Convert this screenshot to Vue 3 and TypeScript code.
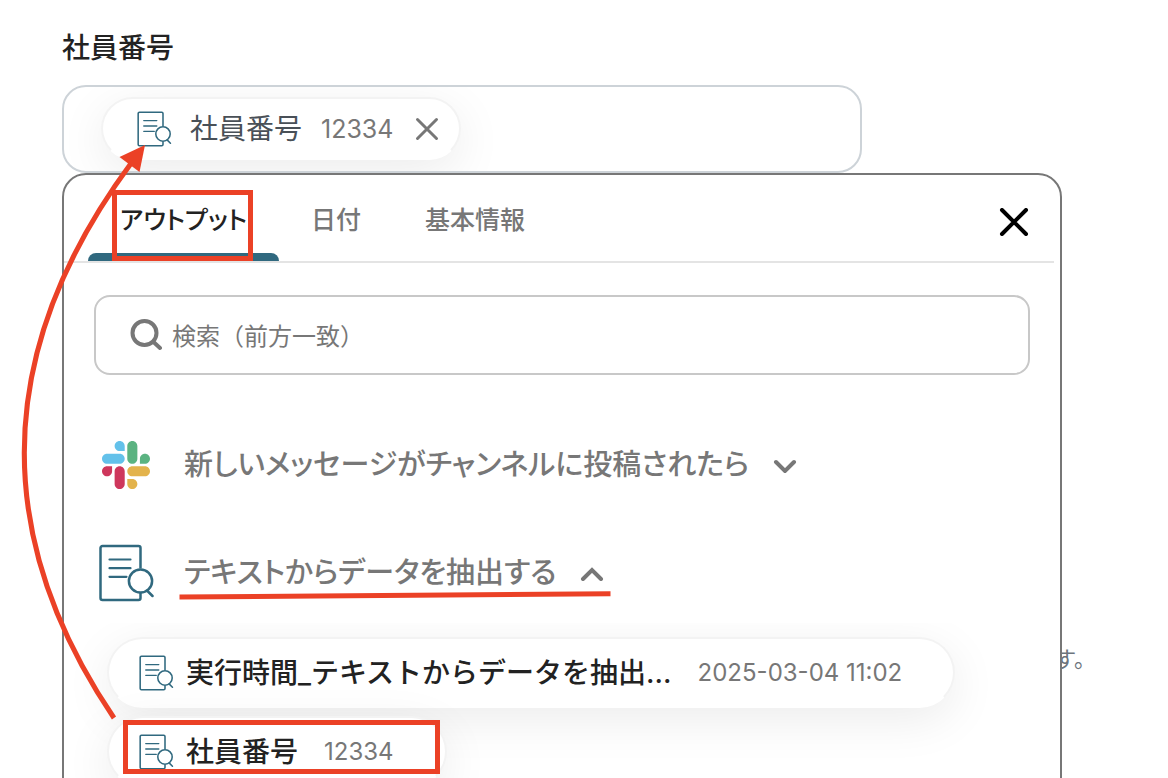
<script setup lang="ts">
import { defineComponent, h, ref } from 'vue'

interface Tab {
  id: string
  label: string
}

interface OutputItem {
  label: string
  value: string
}

const DocSearchIcon = defineComponent({
  name: 'DocSearchIcon',
  setup() {
    return () =>
      h(
        'svg',
        {
          viewBox: '0 0 56 58',
          fill: 'none',
          stroke: '#30697f',
          'stroke-width': 2.5,
          'stroke-linecap': 'round',
          'aria-hidden': 'true',
        },
        [
          h('path', {
            d: 'M42.500 24.500V4a2 2 0 0 0-2-2H4.500a2 2 0 0 0-2 2v50a2 2 0 0 0 2 2h36a2 2 0 0 0 2-2v-5',
            'stroke-linecap': 'butt',
          }),
          h('path', { d: 'M11.500 15.500h21M11.500 24.200h21M11.500 32.800h17', 'stroke-width': 2.2 }),
          h('circle', { cx: 42.5, cy: 37, r: 11.6 }),
          h('path', { d: 'M49.500 47l5 5' }),
        ],
      )
  },
})

const tabs: Tab[] = [
  { id: 'output', label: 'アウトプット' },
  { id: 'date', label: '日付' },
  { id: 'basic', label: '基本情報' },
]

const items: OutputItem[] = [
  { label: '実行時間_テキストからデータを抽出...', value: '2025-03-04 11:02' },
  { label: '社員番号', value: '12334' },
]

const activeTab = ref('output')
const query = ref('')
</script>

<template>
  <main class="page">
    <h1 id="field-title" class="title">社員番号</h1>

    <div class="picker">
      <div class="field" role="group" aria-labelledby="field-title">
        <div class="chip">
          <DocSearchIcon class="doc-small" />
          <span class="chip-label">社員番号</span>
          <span class="chip-value">12334</span>
          <button type="button" class="chip-remove" aria-label="削除">
            <svg viewBox="0 0 24 24" aria-hidden="true">
              <path d="M2.500 2.500l19 19M21.500 2.500l-19 19" />
            </svg>
          </button>
        </div>
      </div>

      <p class="note">す。</p>

      <section class="panel">
        <header class="panel-head">
          <div class="tabs" role="tablist">
            <button
              v-for="tab in tabs"
              :key="tab.id"
              type="button"
              role="tab"
              class="tab"
              :class="{ active: tab.id === activeTab }"
              :aria-selected="tab.id === activeTab"
              @click="activeTab = tab.id"
            >
              {{ tab.label }}
            </button>
          </div>
          <button type="button" class="close" aria-label="閉じる">
            <svg viewBox="0 0 28 28" aria-hidden="true">
              <path d="M2 2l24 24M26 2L2 26" />
            </svg>
          </button>
        </header>

        <label class="search">
          <svg class="search-icon" viewBox="0 0 32 32" aria-hidden="true">
            <circle cx="14.5" cy="14" r="12" />
            <path d="M23.500 23l6.500 6" />
          </svg>
          <input v-model="query" type="text" placeholder="検索（前方一致）" aria-label="検索" />
        </label>

        <div class="groups">
          <button type="button" class="group" aria-expanded="false">
            <span class="group-icon">
              <svg class="slack" viewBox="0 0 122.8 122.8" aria-hidden="true">
                <path
                  fill="#ce375c"
                  d="M25.8 77.6c0 7.1-5.8 12.9-12.9 12.9S0 84.7 0 77.6s5.8-12.9 12.9-12.9h12.9v12.9zM32.3 77.6c0-7.1 5.8-12.9 12.9-12.9s12.9 5.8 12.9 12.9v32.3c0 7.1-5.8 12.9-12.9 12.9s-12.9-5.8-12.9-12.9V77.6z"
                />
                <path
                  fill="#63c1ea"
                  d="M45.2 25.8c-7.1 0-12.9-5.8-12.9-12.9S38.1 0 45.2 0s12.9 5.8 12.9 12.9v12.9H45.2zM45.2 32.3c7.1 0 12.9 5.8 12.9 12.9s-5.8 12.9-12.9 12.9H12.9C5.8 58.1 0 52.3 0 45.2s5.8-12.9 12.9-12.9h32.3z"
                />
                <path
                  fill="#5bb381"
                  d="M97 45.2c0-7.1 5.8-12.9 12.9-12.9s12.9 5.8 12.9 12.9-5.8 12.9-12.9 12.9H97V45.2zM90.5 45.2c0 7.1-5.8 12.9-12.9 12.9s-12.9-5.8-12.9-12.9V12.9C64.7 5.8 70.5 0 77.6 0s12.9 5.8 12.9 12.9v32.3z"
                />
                <path
                  fill="#e3b34c"
                  d="M77.6 97c7.1 0 12.9 5.8 12.9 12.9s-5.8 12.9-12.9 12.9-12.9-5.8-12.9-12.9V97h12.9zM77.6 90.5c-7.1 0-12.9-5.8-12.9-12.9s5.8-12.9 12.9-12.9h32.3c7.1 0 12.9 5.8 12.9 12.9s-5.8 12.9-12.9 12.9H77.6z"
                />
              </svg>
            </span>
            <span class="group-label">新しいメッセージがチャンネルに投稿されたら</span>
            <svg class="chevron" viewBox="0 0 24 16" aria-hidden="true">
              <path d="M3 5l9 9 9-9" />
            </svg>
          </button>

          <button type="button" class="group" aria-expanded="true">
            <span class="group-icon"><DocSearchIcon class="doc-large" /></span>
            <span class="group-label">テキストからデータを抽出する</span>
            <svg class="chevron" viewBox="0 0 24 16" aria-hidden="true">
              <path d="M3 14l9-9 9 9" />
            </svg>
          </button>
        </div>

        <div class="list">
          <button v-for="item in items" :key="item.label" type="button" class="pill">
            <DocSearchIcon class="doc-small" />
            <span class="pill-label">{{ item.label }}</span>
            <span class="pill-value">{{ item.value }}</span>
          </button>
        </div>
      </section>
    </div>

    <svg class="marks" width="1168" height="778" viewBox="0 0 1168 778" aria-hidden="true">
      <rect x="114.5" y="192.5" width="136" height="66" />
      <rect x="125.5" y="722.5" width="312" height="49" />
      <path d="M179.500 597L610.500 593.800" />
      <path d="M114 718Q-74 440 132 162" />
      <path class="head" d="M145 145L119.500 157L139.500 172Z" />
    </svg>
  </main>
</template>

<style>
body {
  margin: 0;
  background: #fff;
}
</style>

<style scoped>
.page {
  position: relative;
  box-sizing: border-box;
  height: 100vh;
  overflow: hidden;
  padding: 28px 106px 0 62px;
  background: #fff;
  color: #222;
  font-family: Inter, "Noto Sans CJK JP", sans-serif;
}

button,
input {
  margin: 0;
  padding: 0;
  border: 0;
  background: none;
  color: inherit;
  font: inherit;
}

button {
  cursor: pointer;
}

.title {
  margin: 0 0 17px;
  font-size: 28px;
  line-height: 40px;
  font-weight: 500;
}

.picker {
  position: relative;
}

.field {
  box-sizing: border-box;
  display: flex;
  align-items: center;
  width: 80%;
  height: 88px;
  padding: 0 37px 1px;
  border: 2px solid #cdd3d8;
  border-radius: 24px;
  overflow: hidden;
}

.chip,
.pill {
  box-sizing: border-box;
  display: flex;
  align-items: center;
  border: 2px solid #f3f3f3;
  border-bottom-color: #fff;
  background: #fff;
  box-shadow: 0 12px 48px rgba(0, 0, 0, 0.08);
}

.chip {
  height: 63px;
  padding: 0 20px 0 33px;
  border-radius: 32px;
}

.doc-small {
  flex: none;
  width: 36px;
  height: 36px;
}

.chip-label {
  margin-left: 18px;
  color: #495057;
  font-size: 28px;
  line-height: 40px;
}

.chip-value {
  margin: 0 22px 0 19px;
  color: #777;
  font-size: 25px;
}

.chip-remove {
  display: flex;
}

.chip-remove svg {
  width: 24px;
  height: 24px;
  fill: none;
  stroke: #777;
  stroke-width: 3;
  stroke-linecap: round;
}

.note {
  position: absolute;
  top: 558px;
  right: -34px;
  margin: 0;
  color: #6c757d;
  font-size: 22px;
  line-height: 32px;
}

.panel {
  position: relative;
  padding-bottom: 40px;
  border: 2px solid #777;
  border-radius: 24px 24px 0 0;
  background: #fff;
}

.panel-head {
  display: flex;
  align-items: center;
  justify-content: space-between;
  height: 86px;
  margin-right: 6px;
  padding: 0 24px;
  border-bottom: 2px solid #e4e4e4;
}

.tabs {
  display: flex;
  align-self: stretch;
}

.tab {
  position: relative;
  padding: 0 32px;
  color: #777;
  font-size: 25px;
  font-weight: 500;
  font-feature-settings: "palt";
}

.tab.active {
  color: #222;
}

.tab.active::after {
  content: "";
  position: absolute;
  right: 0;
  bottom: 0;
  left: 0;
  height: 8px;
  border-radius: 8px 8px 0 0;
  background: #30697f;
}

.close {
  display: flex;
  padding-top: 8px;
}

.close svg {
  width: 32px;
  height: 28px;
  fill: none;
  stroke: #000;
  stroke-width: 4;
  stroke-linecap: round;
}

.search {
  box-sizing: border-box;
  display: flex;
  align-items: center;
  gap: 10px;
  height: 80px;
  margin: 32px 30px 0;
  padding: 0 34px;
  border: 2px solid #c8c8c8;
  border-radius: 16px;
}

.search-icon {
  flex: none;
  width: 32px;
  height: 32px;
  fill: none;
  stroke: #777;
  stroke-width: 4;
  stroke-linecap: round;
}

.search input {
  flex: 1;
  min-width: 0;
  height: 40px;
  padding-top: 2px;
  outline: 0;
  font-size: 24px;
}

.search input::placeholder {
  color: #777;
  opacity: 1;
}

.groups {
  display: flex;
  flex-direction: column;
  align-items: flex-start;
  gap: 44px;
  padding: 58px 30px 18px;
}

.group {
  display: flex;
  align-items: center;
  height: 64px;
  color: #777;
}

.group-icon {
  display: flex;
  align-items: center;
  justify-content: center;
  width: 64px;
  height: 64px;
}

.slack {
  width: 48px;
  height: 48px;
}

.doc-large {
  width: 56px;
  height: 58px;
}

.group-label {
  margin: 0 24px 0 26px;
  font-size: 29px;
  line-height: 40px;
  font-weight: 500;
  font-feature-settings: "palt";
}

.chevron {
  width: 24px;
  height: 16px;
  fill: none;
  stroke: #777;
  stroke-width: 4;
  stroke-linecap: round;
}

.list {
  display: flex;
  flex-direction: column;
  align-items: flex-start;
  gap: 8px;
  padding: 14px 43px 40px;
  overflow: hidden;
}

.pill {
  height: 71px;
  padding: 0 51px 0 29px;
  border-radius: 36px;
}

.pill-label {
  margin: 0 26px 0 12px;
  font-size: 28px;
  line-height: 40px;
  font-weight: 500;
}

.pill-value {
  color: #777;
  font-size: 24px;
}

.marks {
  position: absolute;
  top: 0;
  left: 0;
  fill: none;
  stroke: #eb4126;
  stroke-width: 5;
  pointer-events: none;
}

.marks .head {
  fill: #eb4126;
  stroke: none;
}
</style>
